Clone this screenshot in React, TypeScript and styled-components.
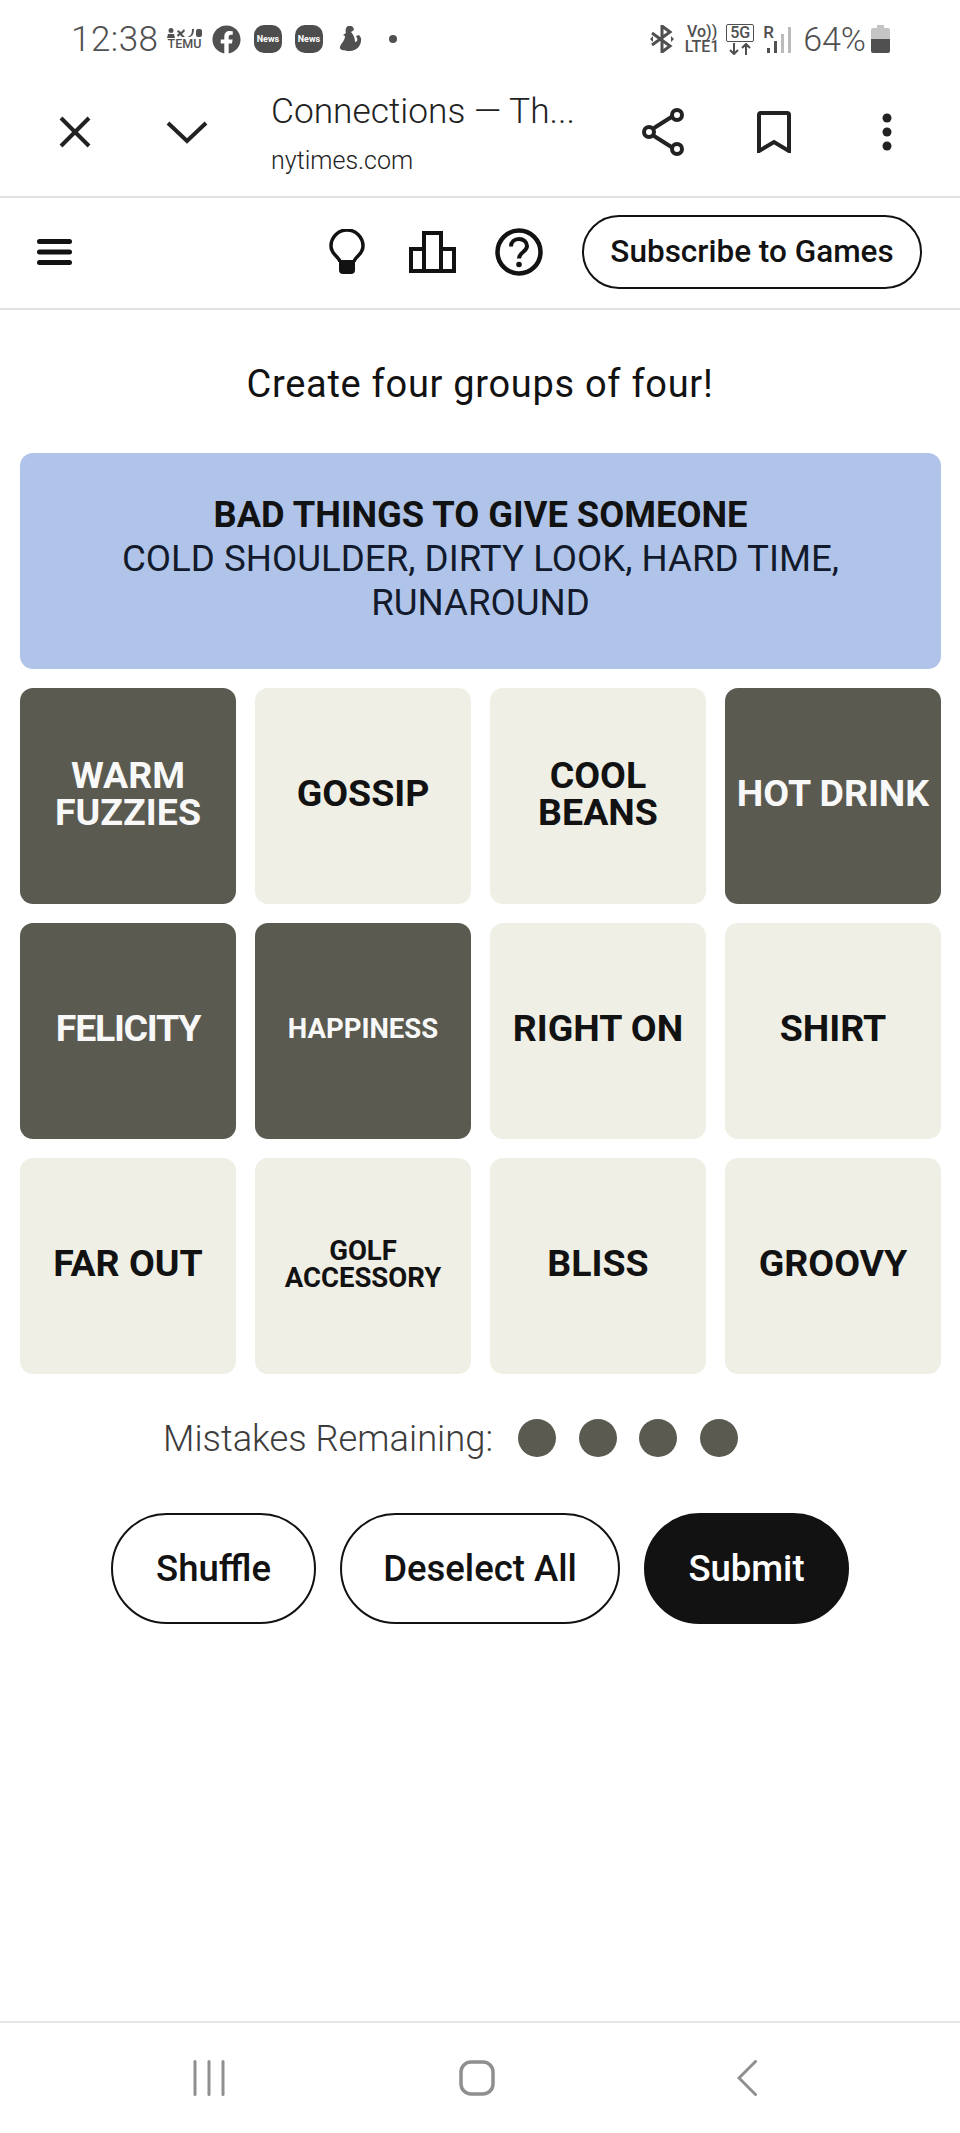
import styled, { createGlobalStyle } from 'styled-components';
import { FaFacebook } from 'react-icons/fa';

const GlobalStyle = createGlobalStyle`
  * {
    box-sizing: border-box;
  }

  body {
    margin: 0;
    background: #fff;
    font-family: Roboto, "Liberation Sans", sans-serif;
    color: #121212;
  }
`;

const Page = styled.div`
  width: 960px;
  height: 2133px;
  display: flex;
  flex-direction: column;
`;

const StatusBar = styled.div`
  height: 78px;
  padding: 0 70px 0 71px;
  display: flex;
  align-items: center;
  justify-content: space-between;
  color: #505050;
`;

const StatusGroup = styled.div`
  display: flex;
  align-items: center;
`;

const Clock = styled.span`
  font-size: 35px;
  font-weight: 300;
  letter-spacing: 0.5px;
  width: 96px;
`;

const Temu = styled.div`
  width: 35px;
  margin-right: 10px;
  font-size: 12.500px;
  font-weight: 500;
  line-height: 12px;
  text-align: center;
  svg {
    display: block;
  }
`;

const FacebookIcon = styled(FaFacebook)`
  font-size: 29px;
  margin-right: 13px;
`;

const NewsIcon = styled.span`
  width: 28px;
  height: 28px;
  margin-right: 13px;
  border-radius: 10px;
  background: #4d4d4d;
  color: #fff;
  font-size: 9px;
  font-weight: 700;
  display: flex;
  align-items: center;
  justify-content: center;
`;

const FigureIcon = styled.svg`
  margin: 0 27px 0 3px;
`;

const NotifyDot = styled.span`
  width: 8px;
  height: 8px;
  border-radius: 50%;
  background: #505050;
`;

const Network = styled.div`
  width: 36px;
  margin: 0 6px 0 9px;
  font-size: 16px;
  font-weight: 500;
  line-height: 15px;
  text-align: center;
  white-space: nowrap;
`;

const FiveG = styled.div`
  width: 28px;
  margin-right: 9px;
  text-align: center;
  font-size: 16px;
  font-weight: 500;
  svg {
    display: block;
    margin: 1px auto 0;
  }
`;

const FiveGLabel = styled.div`
  border: 1.5px solid #505050;
  border-radius: 2px;
  height: 18px;
  line-height: 16px;
`;

const Signal = styled.div`
  width: 30px;
  height: 28px;
  position: relative;
`;

const Roaming = styled.span`
  position: absolute;
  top: -3px;
  left: 0;
  font-size: 17px;
  font-weight: 500;
`;

const Battery = styled.span`
  font-size: 34px;
  font-weight: 300;
  margin: 0 5px 0 10px;
`;

const BrowserBar = styled.div`
  height: 120px;
  padding: 0 0 11px 59px;
  display: flex;
  align-items: center;
  border-bottom: 2px solid #e2e2e2;
  color: #222;
  svg {
    display: block;
  }
`;

const BackIcons = styled.div`
  display: flex;
  align-items: center;
  gap: 75px;
  width: 212px;
`;

const PageInfo = styled.div`
  width: 371px;
  margin-top: 6px;
`;

const PageTitle = styled.div`
  font-size: 35.300px;
  font-weight: 300;
  line-height: 44px;
  margin-top: -4px;
`;

const PageHost = styled.div`
  font-size: 25px;
  font-weight: 300;
  line-height: 30px;
  margin-top: 13px;
`;

const BrowserActions = styled.div`
  display: flex;
  align-items: center;
  gap: 73px;
`;

const MoreDots = styled.svg`
  margin-left: 18px;
`;

const GameHeader = styled.div`
  height: 112px;
  padding: 0 38px 3px 37px;
  display: flex;
  align-items: center;
  justify-content: space-between;
  border-bottom: 2px solid #e2e2e2;
`;

const GameTools = styled.div`
  display: flex;
  align-items: center;
  svg {
    display: block;
  }
`;

const ToolIcon = styled.svg<{ $gap: number }>`
  margin-right: ${(p) => p.$gap}px;
`;

const SubscribeButton = styled.button`
  width: 340px;
  height: 74px;
  border: 2px solid #121212;
  border-radius: 37px;
  background: #fff;
  color: #121212;
  font-family: inherit;
  font-size: 31.500px;
  font-weight: 500;
  padding: 0;
`;

const Prompt = styled.div`
  margin-top: 51px;
  height: 46px;
  font-size: 38px;
  line-height: 46px;
  letter-spacing: 0.7px;
  text-align: center;
`;

const Board = styled.div`
  margin: 46px 20px 0;
  display: grid;
  grid-template-columns: repeat(4, 216px);
  grid-auto-rows: 216px;
  gap: 19px 19px;
`;

const SolvedRow = styled.div`
  grid-column: 1 / -1;
  background: #b0c4ea;
  border-radius: 13px;
  padding: 40px 80px 0;
  text-align: center;
  font-size: 36.700px;
  line-height: 44px;
  color: #121a2c;
`;

const SolvedTitle = styled.div`
  font-size: 36.300px;
  font-weight: 700;
  color: #121212;
`;

const Tile = styled.div<{ $selected?: boolean; $small?: boolean; $tight?: boolean }>`
  border-radius: 13px;
  background: ${(p) => (p.$selected ? '#5a5a50' : '#efefe6')};
  color: ${(p) => (p.$selected ? '#f8f8f8' : '#121212')};
  font-size: ${(p) => (p.$small ? 27.5 : 37.5)}px;
  line-height: ${(p) => (p.$small ? 27 : 37)}px;
  letter-spacing: ${(p) => (p.$tight ? -1.3 : 0)}px;
  font-weight: 700;
  text-align: center;
  white-space: pre-line;
  padding-bottom: 5px;
  display: flex;
  align-items: center;
  justify-content: center;
`;

const MistakesRow = styled.div`
  margin-top: 45px;
  height: 38px;
  padding-left: 163px;
  display: flex;
  align-items: center;
`;

const MistakesLabel = styled.span`
  width: 355px;
  font-size: 36.300px;
  font-weight: 300;
  color: #3c3c3c;
`;

const MistakeDots = styled.div`
  display: flex;
  gap: 22.500px;
`;

const MistakeDot = styled.span`
  width: 38px;
  height: 38px;
  border-radius: 50%;
  background: #5a5a50;
`;

const Controls = styled.div`
  margin-top: 56px;
  display: flex;
  justify-content: center;
  gap: 24px;
`;

const ControlButton = styled.button<{ $primary?: boolean; $w: number }>`
  width: ${(p) => p.$w}px;
  height: 111px;
  border-radius: 56px;
  border: 2px solid #121212;
  background: ${(p) => (p.$primary ? '#121212' : '#fff')};
  color: ${(p) => (p.$primary ? '#fff' : '#121212')};
  font-family: inherit;
  font-size: 36.500px;
  font-weight: 500;
  padding: 0;
`;

const NavBar = styled.div`
  margin-top: auto;
  height: 112px;
  border-top: 2px solid #e6e6e6;
  padding: 37px 0 0 193px;
  display: flex;
  align-items: flex-start;
  gap: 234px;
  svg {
    display: block;
  }
`;

const NavBack = styled.svg`
  margin-left: 8px;
`;

interface TileData {
  word: string;
  selected?: boolean;
  small?: boolean;
  tight?: boolean;
}

const tiles: TileData[] = [
  { word: 'WARM\nFUZZIES', selected: true },
  { word: 'GOSSIP' },
  { word: 'COOL\nBEANS' },
  { word: 'HOT DRINK', selected: true },
  { word: 'FELICITY', selected: true, tight: true },
  { word: 'HAPPINESS', selected: true, small: true },
  { word: 'RIGHT ON' },
  { word: 'SHIRT' },
  { word: 'FAR OUT' },
  { word: 'GOLF\nACCESSORY', small: true },
  { word: 'BLISS' },
  { word: 'GROOVY' },
];

export default function App() {
  return (
    <Page>
      <GlobalStyle />
      <StatusBar>
        <StatusGroup>
          <Clock>12:38</Clock>
          <Temu>
            <svg width="35" height="10" viewBox="0 0 35 10" fill="#505050">
              <path d="M4 0a2.5 2.5 0 1 1 0 5a2.5 2.5 0 1 1 0-5ZM0 10l1-4h6l1 4Z" />
              <path d="M11 2l3 2 3-3 1 2-3 3 3 3h-3l-2-2-2 2-1-2 2-2-2-1Z" />
              <path d="M21 9l1-1c2 0 3-3 3-7h2c0 5-2 8-5 8Z" />
              <rect x="29" y="1" width="6" height="8" rx="2" />
            </svg>
            TEMU
          </Temu>
          <FacebookIcon />
          <NewsIcon>News</NewsIcon>
          <NewsIcon>News</NewsIcon>
          <FigureIcon width="23" height="27" viewBox="0 0 23 27" fill="#505050">
            <path d="M9 0c3-1 6 1 6 4l-3 2c3 3 4 7 4 10 2 0 3-2 2-4l-1-2 3-1 2 3c1 7-4 13-11 13-6 0-11-1-10-4 1-4 5-6 5-11L4 9l3-2c-1-3 0-6 2-7Z" />
          </FigureIcon>
          <NotifyDot />
        </StatusGroup>
        <StatusGroup>
          <svg width="26" height="28" viewBox="0 0 26 28" fill="none" stroke="#505050" strokeWidth="3">
            <path d="M3 8l18 13-8 6V1l8 6L3 20" />
            <path d="M1 14l3-3v6ZM25 14l-3-3v6Z" fill="#505050" stroke="none" />
          </svg>
          <Network>
            Vo))
            <br />
            LTE1
          </Network>
          <FiveG>
            <FiveGLabel>5G</FiveGLabel>
            <svg width="24" height="12" viewBox="0 0 24 12" fill="none" stroke="#505050" strokeWidth="2">
              <path d="M6 0v11M2 7l4 4 4-4M18 12V1M14 5l4-4 4 4" />
            </svg>
          </FiveG>
          <Signal>
            <Roaming>R</Roaming>
            <svg width="30" height="28" viewBox="0 0 30 28">
              <rect x="4" y="23" width="3" height="5" fill="#505050" />
              <rect x="11" y="16" width="3" height="12" fill="#505050" />
              <rect x="18" y="9" width="3" height="19" fill="#bbb" />
              <rect x="25" y="2" width="3" height="26" fill="#bbb" />
            </svg>
          </Signal>
          <Battery>64%</Battery>
          <svg width="19" height="28" viewBox="0 0 19 28">
            <path d="M6 0h7v3h4a2 2 0 0 1 2 2v10H0V5a2 2 0 0 1 2-2h4Z" fill="#c4c4c4" />
            <path d="M0 14h19v12a2 2 0 0 1-2 2H2a2 2 0 0 1-2-2Z" fill="#505050" />
          </svg>
        </StatusGroup>
      </StatusBar>

      <BrowserBar>
        <BackIcons>
          <svg width="32" height="32" viewBox="0 0 32 32" stroke="#222" strokeWidth="4" fill="none">
            <path d="M2 2l28 28M30 2L2 30" />
          </svg>
          <svg width="42" height="24" viewBox="0 0 42 24" stroke="#222" strokeWidth="4" fill="none">
            <path d="M2 3l19 18L40 3" />
          </svg>
        </BackIcons>
        <PageInfo>
          <PageTitle>Connections — Th...</PageTitle>
          <PageHost>nytimes.com</PageHost>
        </PageInfo>
        <BrowserActions>
          <svg width="42" height="48" viewBox="0 0 42 48" stroke="#222" strokeWidth="4" fill="none">
            <path d="M12 20L31 8M12 28l19 12" />
            <circle cx="7" cy="24" r="5" />
            <circle cx="35" cy="7" r="5" />
            <circle cx="35" cy="41" r="5" />
          </svg>
          <svg width="34" height="42" viewBox="0 0 34 42" stroke="#222" strokeWidth="4" fill="none">
            <path d="M2 40V4a2 2 0 0 1 2-2h26a2 2 0 0 1 2 2v36L17 31Z" />
          </svg>
          <MoreDots width="10" height="38" viewBox="0 0 10 38" fill="#222">
            <circle cx="5" cy="5" r="4.5" />
            <circle cx="5" cy="19" r="4.5" />
            <circle cx="5" cy="33" r="4.5" />
          </MoreDots>
        </BrowserActions>
      </BrowserBar>

      <GameHeader>
        <svg width="35" height="28" viewBox="0 0 35 28" stroke="#121212" strokeWidth="5" strokeLinecap="round">
          <path d="M2.5 3.500h30M2.500 14h30M2.500 24.500h30" />
        </svg>
        <GameTools>
          <ToolIcon $gap={44} width="36" height="46" viewBox="0 0 36 46" fill="none" stroke="#121212" strokeWidth="3.500">
            <path d="M11 33c0-5-9-7-9-16a16 16 0 0 1 32 0c0 9-9 11-9 16" />
            <path d="M10 31h16v10a4 4 0 0 1-4 4h-8a4 4 0 0 1-4-4Z" fill="#121212" stroke="none" />
          </ToolIcon>
          <ToolIcon $gap={39} width="47" height="42" viewBox="0 0 47 42" fill="none" stroke="#121212" strokeWidth="4">
            <path d="M2 18h13v22H2ZM15 2h17v38H15ZM32 18h13v22H32Z" />
          </ToolIcon>
          <ToolIcon $gap={39} width="48" height="48" viewBox="0 0 48 48" fill="none" stroke="#121212" strokeWidth="4.500">
            <circle cx="24" cy="24" r="21.500" />
            <path d="M16 18.500c0-4.500 3.500-7.500 8-7.500s8 3 8 7c0 6-8 6-8 12.500" strokeWidth="4" />
            <circle cx="24" cy="36.500" r="2.800" fill="#121212" stroke="none" />
          </ToolIcon>
          <SubscribeButton>Subscribe to Games</SubscribeButton>
        </GameTools>
      </GameHeader>

      <Prompt>Create four groups of four!</Prompt>

      <Board>
        <SolvedRow>
          <SolvedTitle>BAD THINGS TO GIVE SOMEONE</SolvedTitle>
          COLD SHOULDER, DIRTY LOOK, HARD TIME, RUNAROUND
        </SolvedRow>
        {tiles.map((tile) => (
          <Tile key={tile.word} $selected={tile.selected} $small={tile.small} $tight={tile.tight}>
            {tile.word}
          </Tile>
        ))}
      </Board>

      <MistakesRow>
        <MistakesLabel>Mistakes Remaining:</MistakesLabel>
        <MistakeDots>
          {[0, 1, 2, 3].map((i) => (
            <MistakeDot key={i} />
          ))}
        </MistakeDots>
      </MistakesRow>

      <Controls>
        <ControlButton $w={205}>Shuffle</ControlButton>
        <ControlButton $w={280}>Deselect All</ControlButton>
        <ControlButton $w={205} $primary>
          Submit
        </ControlButton>
      </Controls>

      <NavBar>
        <svg width="32" height="36" viewBox="0 0 32 36" stroke="#8f8f8f" strokeWidth="3" strokeLinecap="round">
          <path d="M2 1.500v33M16 1.500v33M30 1.500v33" />
        </svg>
        <svg width="36" height="36" viewBox="0 0 36 36" fill="none" stroke="#8f8f8f" strokeWidth="3.500">
          <rect x="2" y="2" width="32" height="32" rx="10" />
        </svg>
        <NavBack width="20" height="36" viewBox="0 0 20 36" fill="none" stroke="#8f8f8f" strokeWidth="3" strokeLinecap="round">
          <path d="M18.500 1.500L2 18l16.500 16.500" />
        </NavBack>
      </NavBar>
    </Page>
  );
}
